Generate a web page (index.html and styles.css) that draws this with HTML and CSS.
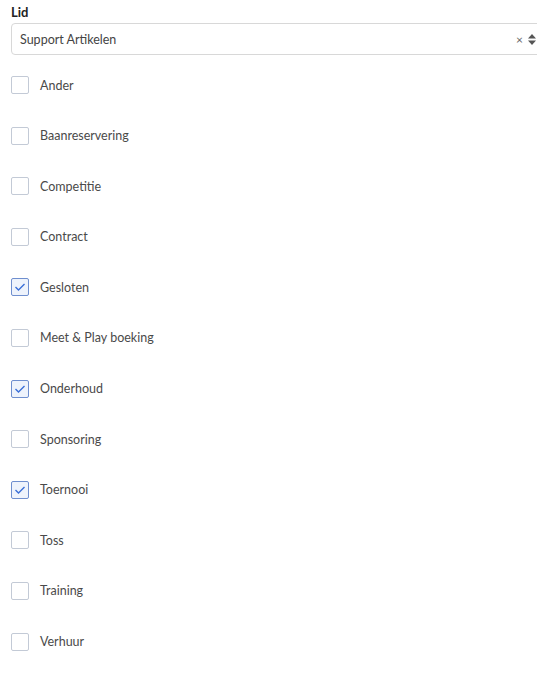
FILE: index.html
```html
<!DOCTYPE html>
<html lang="en">
<head>
    <meta charset="UTF-8">
    <title>Support Artikelen</title>
    <link rel="stylesheet" href="styles.css">
</head>
<body>

    <div class="field">
        <label class="field-label">Lid</label>
        <div class="select">
            <span class="select-value">Support Artikelen</span>
            <span class="select-clear">&times;</span>
            <span class="select-arrows">
                <svg width="8" height="11" viewBox="0 0 8 11"><path d="M4 0 L8 4.5 L0 4.5 Z" fill="#555"/><path d="M0 6.5 L8 6.5 L4 11 Z" fill="#555"/></svg>
            </span>
        </div>
    </div>

    <ul class="checks">
        <li class="check"><span class="box"></span>Ander</li>
        <li class="check"><span class="box"></span>Baanreservering</li>
        <li class="check"><span class="box"></span>Competitie</li>
        <li class="check"><span class="box"></span>Contract</li>
        <li class="check on"><span class="box"><svg width="12" height="10" viewBox="0 0 12 10"><path d="M1.5 5 L4.5 8 L10.5 2" fill="none" stroke="#3b6fd8" stroke-width="1.4"/></svg></span>Gesloten</li>
        <li class="check"><span class="box"></span>Meet &amp; Play boeking</li>
        <li class="check on"><span class="box"><svg width="12" height="10" viewBox="0 0 12 10"><path d="M1.5 5 L4.5 8 L10.5 2" fill="none" stroke="#3b6fd8" stroke-width="1.4"/></svg></span>Onderhoud</li>
        <li class="check"><span class="box"></span>Sponsoring</li>
        <li class="check on"><span class="box"><svg width="12" height="10" viewBox="0 0 12 10"><path d="M1.5 5 L4.5 8 L10.5 2" fill="none" stroke="#3b6fd8" stroke-width="1.4"/></svg></span>Toernooi</li>
        <li class="check"><span class="box"></span>Toss</li>
        <li class="check"><span class="box"></span>Training</li>
        <li class="check"><span class="box"></span>Verhuur</li>
    </ul>

</body>
</html>
```
FILE: styles.css
```css
body { margin: 0; padding: 4px 0 0 11px; font-family: Lato, "Open Sans", sans-serif; font-size: 12.5px; color: #333; background: #fff; overflow: hidden; }
.field { display: flex; flex-direction: column; }
.field-label { font-weight: bold; font-size: 13px; color: #222; height: 19px; line-height: 16px; }
.select { display: flex; align-items: center; height: 30px; border: 1px solid #d8d8d8; border-radius: 4px; padding: 0 0 0 8px; margin-right: -4px; }
.select-value { flex: 1; color: #444; }
.select-clear { color: #666; font-size: 12px; margin-right: 5px; }
.select-arrows { display: flex; width: 12px; }
.checks { list-style: none; margin: 0; padding: 21px 0 0 0; display: flex; flex-direction: column; gap: 32.6px; }
.check { display: flex; align-items: center; height: 18px; color: #4a4a4a; }
.box { width: 18px; height: 18px; border: 1px solid #c3cad6; border-radius: 2px; margin-right: 11px; display: flex; align-items: center; justify-content: center; box-sizing: border-box; }
.check.on .box { border-color: #6f8fcf; background: #eef3fc; }
```
